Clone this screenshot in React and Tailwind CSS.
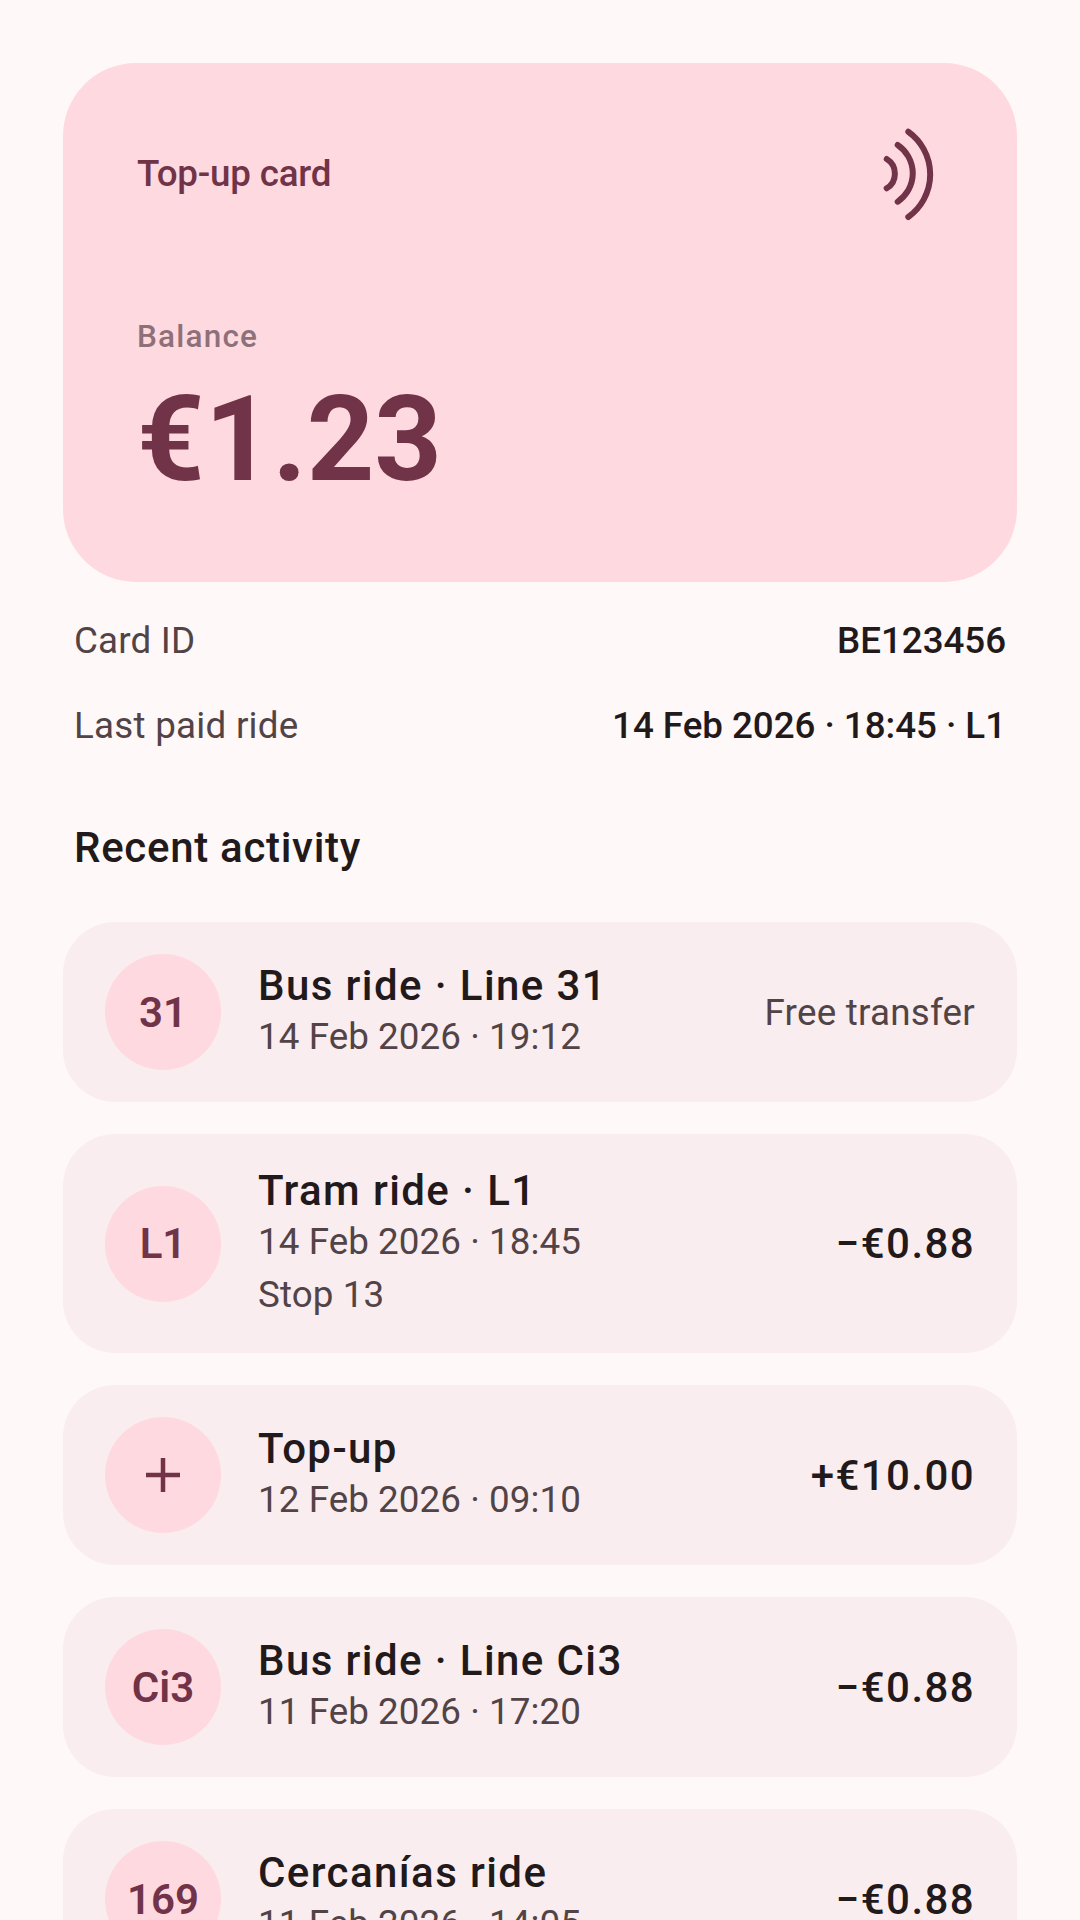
const rows = [
	{ badge: '31', title: 'Bus ride · Line 31', sub: '14 Feb 2026 · 19:12', right: 'Free transfer', muted: true },
	{ badge: 'L1', title: 'Tram ride · L1', sub: '14 Feb 2026 · 18:45', extra: 'Stop 13', right: '−€0.88' },
	{ plus: true, title: 'Top-up', sub: '12 Feb 2026 · 09:10', right: '+€10.00' },
	{ badge: 'Ci3', title: 'Bus ride · Line Ci3', sub: '11 Feb 2026 · 17:20', right: '−€0.88' },
	{ badge: '169', title: 'Cercanías ride', sub: '11 Feb 2026 · 14:05', right: '−€0.88' },
]

const ContactlessIcon = () => (
	<svg width="96" height="96" viewBox="0 15 96 96" fill="none" stroke="#703347" strokeWidth="6" strokeLinecap="round">
		<path d="M68.3 21.7A52.5 52.5 0 0 1 68.3 107" />
		<path d="M57.7 35A34.2 34.2 0 0 1 57.7 91.7" />
		<path d="M46.7 49A17.2 17.2 0 0 1 46.7 78.3" />
	</svg>
)

const PlusIcon = () => (
	<svg width="36" height="36" viewBox="0 0 36 36" stroke="#703347" strokeWidth="4.5" fill="none">
		<path d="M18 1V35M1 18H35" />
	</svg>
)

const ActivityRow = ({ row }) => (
	<div className="flex items-center rounded-[52px] bg-[#f9edef] py-[32px] pl-[42px] pr-[42px]">
		<div className="flex h-[116px] w-[116px] shrink-0 items-center justify-center rounded-full bg-[#ffd9e0] text-[42px] font-semibold text-[#703347]">
			{row.plus ? <PlusIcon /> : row.badge}
		</div>
		<div className={row.extra ? 'ml-[37px] -mt-[1px] -mb-[3px] flex-1' : 'ml-[37px] flex-1 pb-[4px]'}>
			<div className="text-[42px] leading-[52px] font-medium tracking-[1.4px] text-[#22191b]">{row.title}</div>
			<div className="text-[36.75px] leading-[49px] tracking-[0.07px] text-[#524346]">{row.sub}</div>
			{row.extra && <div className="text-[36.75px] leading-[58px] tracking-[0.1px] text-[#524346]">{row.extra}</div>}
		</div>
		{row.muted ? (
			<div className="pt-[2px] text-[36.75px] tracking-[0.24px] text-[#524346]">{row.right}</div>
		) : (
			<div className="text-[42px] font-medium tracking-[1.4px] text-[#22191b]">{row.right}</div>
		)}
	</div>
)

const App = () => {
	return (
		<div className="h-[1920px] overflow-hidden bg-[#fff8f8] px-[63px] pt-[63px] font-['Roboto',sans-serif]">
			<div className="h-[519px] rounded-[73px] bg-[#ffd9e0] pt-[62px] pl-[74px] pr-[81px] text-[#703347]">
				<div className="flex items-center justify-between">
					<div className="pt-[2px] text-[36.75px] font-medium tracking-[-0.2px]">Top-up card</div>
					<ContactlessIcon />
				</div>
				<div className="mt-[95px] text-[31.5px] leading-[42px] font-medium tracking-[1.2px] text-[#8e7079]">Balance</div>
				<div className="mt-[13px] text-[118px] leading-[138px] font-bold">€1.23</div>
			</div>
			<div className="mt-[29px] flex h-[60px] items-center justify-between px-[11px] text-[36.75px]">
				<span className="tracking-[0.2px] text-[#524346]">Card ID</span>
				<span className="font-medium tracking-[-0.05px] text-[#22191b]">BE123456</span>
			</div>
			<div className="mt-[25px] flex h-[60px] items-center justify-between px-[11px] text-[36.75px]">
				<span className="tracking-[0.26px] text-[#524346]">Last paid ride</span>
				<span className="font-medium tracking-[-0.05px] text-[#22191b]">14 Feb 2026 · 18:45 · L1</span>
			</div>
			<div className="mt-[62px] px-[11px] text-[42px] leading-[60px] font-medium tracking-[0.7px] text-[#22191b]">Recent activity</div>
			<div className="mt-[44px] flex flex-col gap-[32px]">
				{rows.map((row) => (
					<ActivityRow key={row.title} row={row} />
				))}
			</div>
		</div>
	)
}

export default App
